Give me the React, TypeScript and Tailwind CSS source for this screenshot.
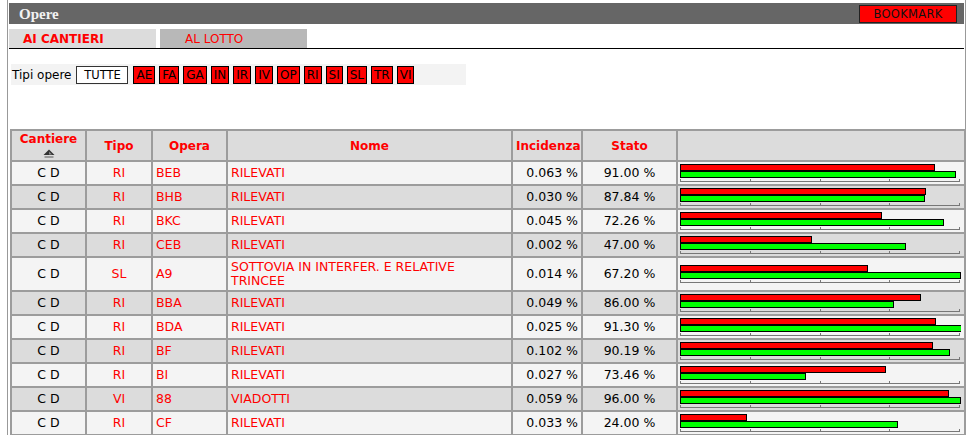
import React from 'react';

type Row = {
    tipo: string;
    opera: string;
    nome: string;
    incidenza: string;
    stato: string;
    red: number;
    green: number;
};

const tipi = ['AE', 'FA', 'GA', 'IN', 'IR', 'IV', 'OP', 'RI', 'SI', 'SL', 'TR', 'VI'];

const rows: Row[] = [
    { tipo: 'RI', opera: 'BEB', nome: 'RILEVATI', incidenza: '0.063 %', stato: '91.00 %', red: 91.0, green: 98.5 },
    { tipo: 'RI', opera: 'BHB', nome: 'RILEVATI', incidenza: '0.030 %', stato: '87.84 %', red: 87.84, green: 87.5 },
    { tipo: 'RI', opera: 'BKC', nome: 'RILEVATI', incidenza: '0.045 %', stato: '72.26 %', red: 72.26, green: 94.3 },
    { tipo: 'RI', opera: 'CEB', nome: 'RILEVATI', incidenza: '0.002 %', stato: '47.00 %', red: 47.0, green: 80.7 },
    { tipo: 'SL', opera: 'A9', nome: 'SOTTOVIA IN INTERFER. E RELATIVE TRINCEE', incidenza: '0.014 %', stato: '67.20 %', red: 67.2, green: 100.3 },
    { tipo: 'RI', opera: 'BBA', nome: 'RILEVATI', incidenza: '0.049 %', stato: '86.00 %', red: 86.0, green: 76.4 },
    { tipo: 'RI', opera: 'BDA', nome: 'RILEVATI', incidenza: '0.025 %', stato: '91.30 %', red: 91.3, green: 104 },
    { tipo: 'RI', opera: 'BF', nome: 'RILEVATI', incidenza: '0.102 %', stato: '90.19 %', red: 90.19, green: 96.4 },
    { tipo: 'RI', opera: 'BI', nome: 'RILEVATI', incidenza: '0.027 %', stato: '73.46 %', red: 73.46, green: 45 },
    { tipo: 'VI', opera: '88', nome: 'VIADOTTI', incidenza: '0.059 %', stato: '96.00 %', red: 96.0, green: 100.3 },
    { tipo: 'RI', opera: 'CF', nome: 'RILEVATI', incidenza: '0.033 %', stato: '24.00 %', red: 24.0, green: 77.9 },
];

const SCALE = 2.8;

function SortUp() {
    return (
        <svg width="14" height="10" viewBox="0 0 14 10" className="mx-auto mt-[3px] block">
            <path d="M7 0.5 L12.5 6 L1.5 6 Z" fill="#333" />
            <path d="M7 2.5 L10 5.5 L7 5.5 Z" fill="#888" />
            <rect x="2.5" y="7" width="9" height="2" fill="#9a9a9a" />
        </svg>
    );
}

function Bars({ red, green }: { red: number; green: number }) {
    return (
        <div className="w-full overflow-hidden">
            <div
                className="h-[7px] border border-black bg-[#f00]"
                style={{ width: Math.round(red * SCALE) }}
            />
            <div
                className="h-[7px] border border-black bg-[#0f0]"
                style={{ width: Math.min(Math.round(green * SCALE), 290) }}
            />
            <div className="flex h-[4px] w-[280px] items-end justify-between border-b border-[#777]">
                <span className="h-[2px] w-px bg-[#777]" />
                <span className="h-[2px] w-px bg-[#777]" />
                <span className="h-[2px] w-px bg-[#777]" />
                <span className="h-[2px] w-px bg-[#777]" />
                <span className="h-[2px] w-px bg-[#777]" />
            </div>
        </div>
    );
}

export default function App() {
    const th = 'border-2 border-[#9c9c9c] bg-[#dcdcdc] px-[3px] text-center align-middle text-[12px] font-bold text-[#f00]';
    const td = 'border-2 border-[#9c9c9c] px-[3px] py-[2px] align-middle';

    return (
        <div className="min-h-screen bg-white font-['DejaVu_Sans',sans-serif] text-[12px] leading-[14px]">
            <div className="ml-[7px] min-h-[435px] w-[959px] border-x border-[#999] px-[1px] pt-[3px]">
                {/* title bar */}
                <div className="flex h-[21px] items-center justify-between bg-[#666] pl-[10px] pr-[7px]">
                    <span className="font-['Liberation_Serif',serif] text-[15px] font-bold text-[#f2f2f2]">Opere</span>
                    <button className="h-[18px] w-[98px] border border-[#222] bg-[#f00] text-[11.5px] leading-[16px] tracking-[0.3px] text-[#111]">
                        BOOKMARK
                    </button>
                </div>

                {/* tabs */}
                <div className="mt-[5px] flex h-[20px] border-b border-black">
                    <div className="flex w-[147px] items-center bg-[#dcdcdc] pl-[14px] font-bold text-[#f00]">
                        AI CANTIERI
                    </div>
                    <div className="ml-[4px] flex w-[147px] items-center bg-[#b8b8b8] pl-[25px] text-[#f00]">
                        AL LOTTO
                    </div>
                </div>

                {/* filtro tipi */}
                <div className="ml-[2px] mt-[15px] flex h-[21px] w-[455px] items-center bg-[#f3f3f3] pl-[1px] text-[12px]">
                    <span className="mr-[5px]">Tipi opere</span>
                    <span className="mr-[5px] flex h-[18px] w-[52px] items-center justify-center border border-[#333] bg-white text-[11.5px]">
                        TUTTE
                    </span>
                    <div className="flex gap-[4px]">
                        {tipi.map((t) => (
                            <span
                                key={t}
                                className="flex h-[18px] items-center border border-black bg-[#f00] px-[2px] text-[12px] text-black"
                            >
                                {t}
                            </span>
                        ))}
                    </div>
                </div>

                {/* tabella opere */}
                <table className="ml-[1px] mt-[44px] w-[954px] table-fixed border-collapse text-[12.5px]">
                    <colgroup>
                        <col className="w-[75px]" />
                        <col className="w-[66px]" />
                        <col className="w-[75px]" />
                        <col className="w-[285px]" />
                        <col className="w-[70px]" />
                        <col className="w-[95px]" />
                        <col className="w-[288px]" />
                    </colgroup>
                    <thead>
                        <tr className="h-[31px]">
                            <th className={th}>
                                Cantiere
                                <SortUp />
                            </th>
                            <th className={th}>Tipo</th>
                            <th className={th}>Opera</th>
                            <th className={th}>Nome</th>
                            <th className={th}>Incidenza</th>
                            <th className={th}>Stato</th>
                            <th className={th}></th>
                        </tr>
                    </thead>
                    <tbody>
                        {rows.map((r, i) => (
                            <tr key={r.opera} className={i % 2 === 0 ? 'bg-[#f4f4f4]' : 'bg-[#dcdcdc]'}>
                                <td className={`${td} text-center`}>C D</td>
                                <td className={`${td} text-center text-[#f00]`}>{r.tipo}</td>
                                <td className={`${td} text-[#f00]`}>{r.opera}</td>
                                <td className={`${td} text-[#f00]`}>{r.nome}</td>
                                <td className={`${td} text-right`}>{r.incidenza}</td>
                                <td className={`${td} text-center`}>{r.stato}</td>
                                <td className="border-2 border-[#9c9c9c] py-[2px] pl-[2px] pr-[3px] align-middle">
                                    <Bars red={r.red} green={r.green} />
                                </td>
                            </tr>
                        ))}
                    </tbody>
                </table>
            </div>
        </div>
    );
}
